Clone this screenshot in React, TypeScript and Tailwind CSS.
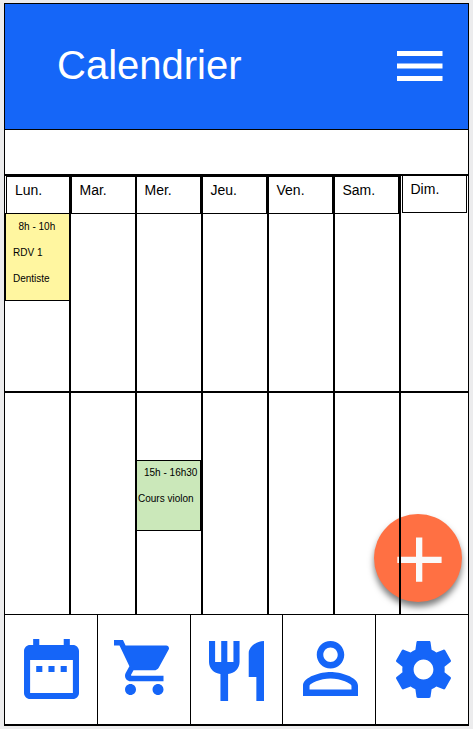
import type { ReactNode } from "react";

type IconProps = { viewBox: string; d: string; className: string };

function Icon({ viewBox, d, className }: IconProps) {
  return (
    <svg viewBox={viewBox} preserveAspectRatio="none" className={`block fill-[#1565f8] ${className}`}>
      <path d={d} />
    </svg>
  );
}

function Header() {
  return (
    <header className="flex h-[126px] shrink-0 items-start justify-between border-b border-black bg-[#1566f8] pr-[25px] pl-[52px]">
      <h1 className="pt-[38px] text-[40px] leading-[46px] text-white">Calendrier</h1>
      <svg viewBox="0 0 46 30" className="mt-[47px] block h-[30px] w-[46px] fill-white">
        <path d="M0 0h45.5v5H0zM0 12.4h45.5v5H0zM0 25h45.5v5H0z" />
      </svg>
    </header>
  );
}

type Day = { label: string; cell: string; column: string; morning?: ReactNode; afternoon?: ReactNode };

const days: Day[] = [
  {
    label: "Lun.",
    cell: "ml-px h-[38px] border-t border-l pl-[8px] pt-[5px]",
    column: "w-[66px] border-r-2",
    morning: (
      <div className="-mt-px h-[88px] border-y border-l border-black bg-[#fff6a0] pl-[7px] text-[10px] leading-[26px]">
        <p className="pl-[5.5px]">8h - 10h</p>
        <p>RDV 1</p>
        <p>Dentiste</p>
      </div>
    ),
  },
  { label: "Mar.", cell: "h-[38px] border-t border-l pl-[7.5px] pt-[5px]", column: "w-[66px] border-r-2" },
  {
    label: "Mer.",
    cell: "h-[38px] border-t border-r pl-[7.5px] pt-[5px]",
    column: "w-[66px] border-r-2",
    afternoon: (
      <div className="mt-[67px] h-[71px] border-y border-r border-black bg-[#cbe8ba] pl-px text-[10px] leading-[26px] whitespace-nowrap">
        <p className="-mt-px pl-[6px]">15h - 16h30</p>
        <p>Cours violon</p>
      </div>
    ),
  },
  { label: "Jeu.", cell: "h-[38px] border-t border-r pl-[7.5px] pt-[5px]", column: "w-[66px] border-r-2" },
  { label: "Ven.", cell: "h-[38px] border-t border-r pl-[7.5px] pt-[5px]", column: "w-[66px] border-r-2" },
  { label: "Sam.", cell: "h-[38px] border-t border-r pl-[7.5px] pt-[5px]", column: "w-[66px] border-r-2" },
  { label: "Dim.", cell: "mx-px h-[37px] border-x pl-[7.5px] pt-[5px]", column: "w-[67px]" },
];

function Calendar() {
  return (
    <main className="relative flex h-[440px] shrink-0 border-t-2 border-black">
      <button
        aria-label="Ajouter"
        className="absolute top-[338px] left-[369px] size-[88px] rounded-full bg-[#ff7043] shadow-[0_5px_6px_rgba(0,0,0,0.5)]"
      >
        <svg viewBox="0 0 88 88" className="block size-full fill-[#fafafa]">
          <path d="M42 23.4h6.3v19.3h19.3V49H48.3v18.7H42V49H23.3v-6.3H42z" />
        </svg>
      </button>
      {days.map((day) => (
        <section key={day.label} className={`relative z-10 flex flex-col border-black ${day.column}`}>
          <div className="h-[217px] shrink-0 border-b-2 border-black">
            <h2 className={`border-b border-black text-[14px] leading-4 ${day.cell}`}>{day.label}</h2>
            {day.morning}
          </div>
          <div className="flex-1">{day.afternoon}</div>
        </section>
      ))}
    </main>
  );
}

function NavBar() {
  return (
    <nav className="flex h-[110px] shrink-0 border-t border-black">
      <a className="w-[93px] border-r border-black pt-6 pl-[19px]">
        <Icon
          viewBox="3 2 18 20"
          className="h-[60px] w-[55px]"
          d="M9 11H7v2h2v-2zm4 0h-2v2h2v-2zm4 0h-2v2h2v-2zm2-7h-1V2h-2v2H8V2H6v2H5c-1.11 0-1.99.9-1.99 2L3 20c0 1.1.89 2 2 2h14c1.1 0 2-.9 2-2V6c0-1.1-.9-2-2-2zm0 16H5V9h14v11z"
        />
      </a>
      <a className="w-[93px] border-r border-black pt-[25px] pl-[16px]">
        <Icon
          viewBox="1 2 20 20"
          className="size-[55px]"
          d="M7 18c-1.1 0-1.99.9-1.99 2S5.9 22 7 22s2-.9 2-2-.9-2-2-2zM1 2v2h2l3.6 7.59-1.35 2.45c-.16.28-.25.61-.25.96 0 1.1.9 2 2 2h12v-2H7.42c-.14 0-.25-.11-.25-.25l.03-.12.9-1.63h7.45c.75 0 1.41-.41 1.75-1.03l3.58-6.49c.08-.14.12-.31.12-.48 0-.55-.45-1-1-1H5.21l-.94-2H1zm16 16c-1.1 0-1.99.9-1.99 2s.89 2 1.99 2 2-.9 2-2-.9-2-2-2z"
        />
      </a>
      <a className="w-[92px] border-r border-black pt-[26px] pl-[18px]">
        <Icon
          viewBox="3 2 18 20"
          className="h-[60px] w-[55px]"
          d="M11 9H9V2H7v7H5V2H3v7c0 2.12 1.66 3.84 3.75 3.97V22h2.5v-9.03C11.34 12.84 13 11.12 13 9V2h-2v7zm5-3v8h2.5v8H21V2c-2.76 0-5 2.24-5 4z"
        />
      </a>
      <a className="w-[93px] border-r border-black pt-[26px] pl-[20px]">
        <Icon
          viewBox="4 4 16 16"
          className="size-[55px]"
          d="M12 5.9c1.16 0 2.1.94 2.1 2.1s-.94 2.1-2.1 2.1S9.9 9.16 9.9 8s.94-2.1 2.1-2.1m0 9c2.97 0 6.1 1.46 6.1 2.1v1.1H5.9V17c0-.64 3.13-2.1 6.1-2.1M12 4C9.79 4 8 5.79 8 8s1.79 4 4 4 4-1.79 4-4-1.79-4-4-4zm0 9c-2.67 0-8 1.34-8 4v3h16v-3c0-2.66-5.33-4-8-4z"
        />
      </a>
      <a className="w-[92px] pt-[26px] pl-[20px]">
        <Icon
          viewBox="2.27 2 19.46 20"
          className="h-[57px] w-[55px]"
          d="M19.43 12.98c.04-.32.07-.64.07-.98s-.03-.66-.07-.98l2.11-1.65c.19-.15.24-.42.12-.64l-2-3.46c-.12-.22-.39-.3-.61-.22l-2.49 1c-.52-.4-1.08-.73-1.69-.98l-.38-2.65C14.46 2.18 14.25 2 14 2h-4c-.25 0-.46.18-.49.42l-.38 2.65c-.61.25-1.17.59-1.69.98l-2.49-1c-.23-.09-.49 0-.61.22l-2 3.46c-.13.22-.07.49.12.64l2.11 1.65c-.04.32-.07.65-.07.98s.03.66.07.98l-2.11 1.65c-.19.15-.24.42-.12.64l2 3.46c.12.22.39.3.61.22l2.49-1c.52.4 1.08.73 1.69.98l.38 2.65c.03.24.24.42.49.42h4c.25 0 .46-.18.49-.42l.38-2.65c.61-.25 1.17-.59 1.69-.98l2.49 1c.23.09.49 0 .61-.22l2-3.46c.12-.22.07-.49-.12-.64l-2.11-1.65zM12 15.5c-1.93 0-3.5-1.57-3.5-3.5s1.57-3.5 3.5-3.5 3.5 1.57 3.5 3.5-1.57 3.5-3.5 3.5z"
        />
      </a>
    </nav>
  );
}

export default function App() {
  return (
    <div className="h-[729px] w-[473px] bg-[#ececed] pt-[3px] pl-1 font-['Liberation_Sans',Arial,sans-serif] text-black">
      <div className="flex h-[723px] w-[465px] flex-col border border-b-2 border-black bg-white">
        <Header />
        <div className="h-[44px] shrink-0" />
        <Calendar />
        <NavBar />
      </div>
    </div>
  );
}
